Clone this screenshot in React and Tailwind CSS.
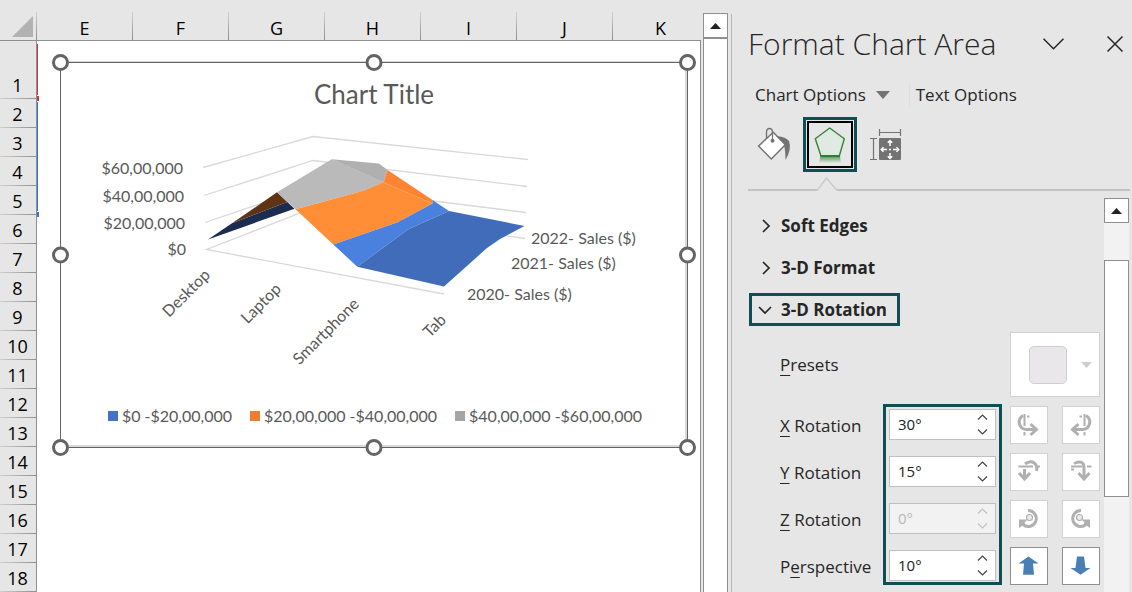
import React from "react";

const COLUMNS = ["E", "F", "G", "H", "I", "J", "K"];
const ROWS = Array.from({ length: 18 }, (_, i) => i + 1);

const HANDLES = [
  "-left-[9px] -top-[9px]",
  "left-1/2 -top-[9px] -translate-x-1/2",
  "-right-[9px] -top-[9px]",
  "-left-[9px] top-1/2 -translate-y-1/2",
  "-right-[9px] top-1/2 -translate-y-1/2",
  "-left-[9px] -bottom-[9px]",
  "left-1/2 -bottom-[9px] -translate-x-1/2",
  "-right-[9px] -bottom-[9px]",
];

const valueTicks = [
  { label: "$60,00,000", x: 183, y: 174 },
  { label: "$40,00,000", x: 184, y: 202 },
  { label: "$20,00,000", x: 185, y: 229 },
  { label: "$0", x: 186, y: 255 },
];

const categories = [
  { label: "Desktop", x: 211, y: 276 },
  { label: "Laptop", x: 282, y: 290 },
  { label: "Smartphone", x: 360, y: 305 },
  { label: "Tab", x: 447, y: 321 },
];

const seriesLabels = [
  { label: "2022- Sales ($)", x: 531, y: 244 },
  { label: "2021- Sales ($)", x: 511, y: 269 },
  { label: "2020- Sales ($)", x: 467, y: 300 },
];

const gridLines = [
  "203,167.5 313,136.5 528,159.5",
  "204,195.5 313,160.5 527,186.5",
  "205,222.5 313,186 526,212.5",
  "525,238.5 313,208 206.5,249.5 444,294",
];

const surface = [
  { fill: "#1a2c50", points: "208,239.5 232,223.3 287.3,202 294.5,208.7" },
  { fill: "#5f3316", points: "232,223.3 277,192.3 287.3,202" },
  { fill: "#bababa", points: "277,192.3 331.7,159.3 384,182.3 363.5,190.7 295.5,209.3" },
  { fill: "#b0b0b0", points: "331.7,159.3 379,163.5 387.5,170 383.5,182.3" },
  { fill: "#ff8e37", points: "295.5,209.3 363.5,190.7 383.5,182.3 432.5,203.5 397.7,222.3 333.3,244.5" },
  { fill: "#ff8431", points: "387.5,170 432.5,200 432.5,203.5 383.5,182.3" },
  { fill: "#4a80de", points: "333.3,244.5 397.7,222.3 432.5,203.5 432.5,200 449,211 408.3,229.3 357.3,266.7" },
  { fill: "#416cba", points: "449,211 524.5,226 500,239 486.7,248.3 444,286.5 357.3,266.7 408.3,229.3" },
];

const legend = [
  { label: "$0 -$20,00,000", color: "bg-[#4472c4]" },
  { label: "$20,00,000 -$40,00,000", color: "bg-[#ed7d31]" },
  { label: "$40,00,000 -$60,00,000", color: "bg-[#a5a5a5]" },
];

const UpTriangle = () => (
  <svg width="11" height="6" viewBox="0 0 11 6" aria-hidden="true">
    <path d="M5.5 0 11 6H0Z" fill="#222" />
  </svg>
);

const SurfaceChart = () => (
  <div className="relative ml-[23px] mr-[21px] mt-[21px] flex flex-col border border-[#646464] bg-white font-['Lato',sans-serif] text-[#595959] shadow-[inset_-2px_-2px_0_#d9d9d9,0_-1px_0_#d9d9d9]">
    <h2 className="mt-4 text-center text-[26px] leading-[30px]">Chart Title</h2>
    <svg viewBox="61 120 626 270" className="mt-[11px] w-full" role="img" aria-label="3-D surface chart of sales">
      <g fill="none" stroke="#d9d9d9" strokeWidth="1.3">
        {gridLines.map((points) => (
          <polyline key={points} points={points} />
        ))}
      </g>
      {surface.map((face) => (
        <polygon key={face.points} points={face.points} fill={face.fill} />
      ))}
      <g fill="#595959" fontSize="16">
        {valueTicks.map((t) => (
          <text key={t.label} x={t.x} y={t.y} textAnchor="end">
            {t.label}
          </text>
        ))}
        {categories.map((c) => (
          <text key={c.label} textAnchor="end" transform={`translate(${c.x} ${c.y}) rotate(-45)`}>
            {c.label}
          </text>
        ))}
        {seriesLabels.map((s) => (
          <text key={s.label} x={s.x} y={s.y}>
            {s.label}
          </text>
        ))}
      </g>
    </svg>
    <ul className="mb-5 mt-[15px] flex justify-center gap-[18px] pl-[2px] text-[16px] leading-[22px]">
      {legend.map((item) => (
        <li key={item.label} className="flex items-center gap-1">
          <span className={`size-[10px] ${item.color}`} />
          {item.label}
        </li>
      ))}
    </ul>
    {HANDLES.map((position) => (
      <span
        key={position}
        className={`absolute size-[17px] rounded-full border-3 border-[#646464] bg-white ${position}`}
      />
    ))}
  </div>
);

const Sheet = () => (
  <div className="relative min-w-0 flex-1 overflow-hidden bg-white after:absolute after:bottom-0 after:right-0 after:top-10 after:w-px after:bg-[#8f8f8f]">
    <table className="w-max table-fixed border-separate border-spacing-0 text-[18px] text-black">
      <thead>
        <tr className="bg-[#e6e6e6]">
          <th className="w-[37px] border-b border-[#8f8f8f] p-0">
            <div className="flex h-10 w-[37px] items-end">
              <svg className="mb-[3px] ml-3" width="21" height="21" viewBox="0 0 21 21" aria-hidden="true">
                <path d="M21 0V21H0Z" fill="#b2b2b2" />
              </svg>
              <span className="ml-auto h-7 w-px bg-linear-to-b from-[#d0d0d0] to-[#8f8f8f]" />
            </div>
          </th>
          {COLUMNS.map((name) => (
            <th key={name} scope="col" className="w-24 border-b border-[#8f8f8f] p-0 font-normal">
              <div className="flex h-10 w-24 items-end">
                <span className="flex-1 text-center leading-6">{name}</span>
                <span className="h-7 w-px bg-linear-to-b from-[#d0d0d0] to-[#8f8f8f]" />
              </div>
            </th>
          ))}
        </tr>
      </thead>
      <tbody>
        {ROWS.map((row) => (
          <tr key={row} className={row === 1 ? "h-[58px]" : "h-[29px]"}>
            <th scope="row" className="border-r border-[#8f8f8f] bg-[#e6e6e6] p-0 align-bottom font-normal">
              <span className="block h-7 pr-px leading-[30px]">{row}</span>
              <span className="block h-px bg-linear-to-r from-[#d0d0d0] to-[#8f8f8f]" />
            </th>
            {row === 1 && (
              <td colSpan={COLUMNS.length} rowSpan={ROWS.length} className="relative p-0 align-top">
                <span className="absolute left-0 top-[3px] h-[51px] w-px bg-[#c23b48]" />
                <span className="absolute left-0 top-[55px] h-[5px] w-[2px] bg-[#c23b48]" />
                <span className="absolute left-0 top-[61px] h-[109px] w-px bg-[#3b74d8]" />
                <span className="absolute left-0 top-[171px] h-[5px] w-[2px] bg-[#3b74d8]" />
                <SurfaceChart />
              </td>
            )}
          </tr>
        ))}
      </tbody>
    </table>
  </div>
);

const SheetScrollbar = () => (
  <div className="ml-[2px] mr-[3px] flex w-[25px] flex-col pt-[13px]">
    <button
      type="button"
      aria-label="Scroll up"
      className="flex h-[25px] items-center justify-center border border-[#8f8f8f] bg-white"
    >
      <UpTriangle />
    </button>
    <div className="flex-1 border-x border-t border-[#8f8f8f] bg-white" />
  </div>
);

const BucketIcon = () => (
  <svg width="36" height="36" viewBox="757 127 36 36" aria-hidden="true">
    <path d="M777 136q9 1 12 5q3 8-3.500 19q0-9-1.500-15Z" fill="#737373" />
    <path d="M773.300 132.300 785.300 144.700 771.300 159 758.600 146Z" fill="#fff" stroke="#737373" strokeWidth="1.500" />
    <path d="M766.500 139v-6.500q0-4 3-4t3 4v8" fill="none" stroke="#737373" strokeWidth="1.300" />
    <circle cx="772.500" cy="140.700" r="2" fill="#737373" />
  </svg>
);

const PentagonIcon = () => (
  <svg width="42" height="43" viewBox="809 123 42 43" aria-hidden="true">
    <defs>
      <linearGradient id="reflection" x1="0" y1="0" x2="0" y2="1">
        <stop offset="0" stopColor="#2f7d32" stopOpacity="0.8" />
        <stop offset="1" stopColor="#2f7d32" stopOpacity="0" />
      </linearGradient>
    </defs>
    <path d="M820.500 156H840L841 163H819Z" fill="url(#reflection)" />
    <path d="M829.700 128 844.300 138.700 839.300 156H821L815.300 138.700Z" fill="#dfeae0" stroke="#3a813a" strokeWidth="1.400" />
    <path d="M820.500 156H840" stroke="#2f7d32" strokeWidth="2" />
  </svg>
);

const SizeIcon = () => (
  <svg width="36" height="36" viewBox="868 127 36 36" aria-hidden="true">
    <path d="M879 132.500H901M879.500 129v7M900.500 129v7M873.500 138.500V159.500M870 138.500h7M870 159.500h7" fill="none" stroke="#737373" strokeWidth="1.200" />
    <rect x="879" y="138" width="22" height="22" rx="1" fill="#737373" />
    <path
      d="M890 141v5M890 158v-5M882 149.500h5M898 149.500h-5M887.800 142.700 890 140.500l2.200 2.200M887.800 156.300l2.200 2.200 2.200-2.200M883.500 147.300l-2.200 2.200 2.200 2.200M896.500 147.300l2.200 2.200-2.200 2.200M889 149.500h2"
      fill="none"
      stroke="#fff"
      strokeWidth="1.500"
    />
  </svg>
);

const TurnX = () => (
  <g stroke="#b0b0b0" fill="none">
    <path d="M14.500 8V20M14.500 26V29.500" strokeWidth="2" />
    <path d="M17 10.500h2.500" strokeWidth="2" />
    <path d="M13 9.500Q8.500 12.500 9.300 17Q10.500 23.500 17 23.500H26" strokeWidth="3" />
    <path d="M20.500 18 26.500 23.500 20.500 29" strokeWidth="3" />
  </g>
);

const TurnZ = () => (
  <g stroke="#b0b0b0" fill="none">
    <path d="M18 10.500A8 8 0 1 1 13 24.500" strokeWidth="3" />
    <path d="M9 19.500h8.500l-3 3 1 2-3 1L9 28Z" fill="#b0b0b0" stroke="none" />
    <circle cx="19.500" cy="17.500" r="3" fill="#efebf1" strokeWidth="1.200" />
  </g>
);

const icons = {
  xLeft: <TurnX />,
  xRight: (
    <g transform="matrix(-1 0 0 1 37 0)">
      <TurnX />
    </g>
  ),
  yUp: (
    <g stroke="#b0b0b0" fill="none">
      <path d="M8.500 13.500H23M28 13.500h2" strokeWidth="2" />
      <path d="M15 11Q22 6 26 12Q27.500 15 26.500 18" strokeWidth="3" />
      <path d="M14.500 16V26" strokeWidth="3" />
      <path d="M9 20 14.500 26 20 20" strokeWidth="3" />
    </g>
  ),
  yDown: (
    <g stroke="#b0b0b0" fill="none">
      <path d="M9 13.500H20M25 13.500h4.500M9 16.500h3" strokeWidth="2" />
      <path d="M12 10.500Q22 6 22 15V26" strokeWidth="3" />
      <path d="M16.500 20 22 26 27.500 20" strokeWidth="3" />
    </g>
  ),
  zLeft: <TurnZ />,
  zRight: (
    <g transform="matrix(-1 0 0 1 37 0)">
      <TurnZ />
    </g>
  ),
  narrow: <path d="M18.500 9.500 28.500 16.500H23L24 27.700H13L14 16.500H8.500Z" fill="#4a7fb5" />,
  widen: <path d="M18.500 27.700 28.500 21H23.500L22 9.500H15L13.500 21H8.500Z" fill="#4a7fb5" />,
};

const rotations = [
  { id: "rot-x", before: "", accessKey: "X", after: " Rotation", value: "30°" },
  { id: "rot-y", before: "", accessKey: "Y", after: " Rotation", value: "15°" },
  { id: "rot-z", before: "", accessKey: "Z", after: " Rotation", value: "0°", disabled: true },
  { id: "perspective", before: "P", accessKey: "e", after: "rspective", value: "10°" },
];

const rotateButtons = [
  { label: "Rotate left", icon: "xLeft" },
  { label: "Rotate right", icon: "xRight" },
  { label: "Rotate up", icon: "yUp" },
  { label: "Rotate down", icon: "yDown" },
  { label: "Rotate counter-clockwise", icon: "zLeft" },
  { label: "Rotate clockwise", icon: "zRight" },
  { label: "Narrow field of view", icon: "narrow", active: true },
  { label: "Widen field of view", icon: "widen", active: true },
];

const sections = [
  { title: "Soft Edges", open: false },
  { title: "3-D Format", open: false },
  { title: "3-D Rotation", open: true },
];

const Stepper = ({ disabled }) => (
  <div
    className={`flex w-[25px] flex-col items-center justify-center gap-[9px] ${
      disabled ? "text-[#c0c0c0]" : "text-[#444]"
    }`}
  >
    <button type="button" aria-label="Increase" disabled={disabled}>
      <svg width="11" height="6" viewBox="0 0 11 6" fill="none" stroke="currentColor" strokeWidth="1.200">
        <path d="M1 5.500 5.500 1 10 5.500" />
      </svg>
    </button>
    <button type="button" aria-label="Decrease" disabled={disabled}>
      <svg width="11" height="6" viewBox="0 0 11 6" fill="none" stroke="currentColor" strokeWidth="1.200">
        <path d="M1 .5 5.500 5 10 .5" />
      </svg>
    </button>
  </div>
);

const RotationControls = () => (
  <div className="mt-[7px] flex pl-8">
    <div className="flex flex-1 flex-col gap-[9px] pt-[3px]">
      {rotations.map((r) => (
        <label key={r.id} htmlFor={r.id} className="h-[38px] whitespace-nowrap leading-[38px]">
          {r.before}
          <span className="underline decoration-1 underline-offset-4">{r.accessKey}</span>
          {r.after}
        </label>
      ))}
    </div>
    <div className="flex w-[119px] flex-col gap-4 self-start border-3 border-[#0e4f56] px-[3px] pb-px pt-[2px]">
      {rotations.map((r) => (
        <div
          key={r.id}
          className={`flex h-[31px] border border-[#c0c0c0] ${r.disabled ? "bg-[#f2f2f2]" : "bg-white"}`}
        >
          <input
            id={r.id}
            type="text"
            defaultValue={r.value}
            disabled={r.disabled}
            className="min-w-0 flex-1 pl-2 text-[15px] text-[#222] outline-none disabled:text-[#b8b8b8]"
          />
          <Stepper disabled={r.disabled} />
        </div>
      ))}
    </div>
    <div className="ml-2 grid grid-cols-2 content-start gap-x-[14px] gap-y-[9px] pt-[2px]">
      {rotateButtons.map((b) => (
        <button
          key={b.icon}
          type="button"
          aria-label={b.label}
          disabled={!b.active}
          className={`size-[38px] border bg-white ${b.active ? "border-[#8f8f8f]" : "border-[#d2d2d2]"}`}
        >
          <svg width="36" height="36" viewBox="1 1 36 36" aria-hidden="true">
            {icons[b.icon]}
          </svg>
        </button>
      ))}
    </div>
  </div>
);

const FormatPane = () => (
  <aside className="flex w-[400px] shrink-0 flex-col pl-4 pr-[2px] text-[17px] text-[#262626]">
    <header className="flex items-center pr-[7px] pt-[22px]">
      <h1 className="flex-1 whitespace-nowrap text-[30px] font-light leading-[44px]">Format Chart Area</h1>
      <button type="button" aria-label="Task pane options">
        <svg width="21" height="12" viewBox="0 0 21 12" fill="none" stroke="#262626" strokeWidth="1.500">
          <path d="M.5 .8 10.500 10.800 20.500 .8" />
        </svg>
      </button>
      <button type="button" aria-label="Close" className="ml-[43px]">
        <svg width="16" height="16" viewBox="0 0 16 16" stroke="#262626" strokeWidth="1.500">
          <path d="M.5 .5 15.500 15.500M15.500 .5 .5 15.500" />
        </svg>
      </button>
    </header>

    <div className="mt-[17px] flex h-6 items-center pl-[7px] leading-6">
      <button type="button" className="flex items-center gap-[10px] whitespace-nowrap">
        Chart Options
        <svg width="14" height="8" viewBox="0 0 14 8" aria-hidden="true">
          <path d="M0 0H14L7 8Z" fill="#737373" />
        </svg>
      </button>
      <span className="ml-[19px] h-6 w-px bg-[#dedede]" />
      <button type="button" className="ml-[6px] whitespace-nowrap">
        Text Options
      </button>
    </div>

    <div className="mt-[10px] flex h-[55px] items-center pl-[9px]">
      <button type="button" aria-label="Fill & Line">
        <BucketIcon />
      </button>
      <button type="button" aria-label="Effects" className="ml-[10px] border-3 border-[#0e4f56] p-px">
        <span className="block border-2 border-black">
          <PentagonIcon />
        </span>
      </button>
      <button type="button" aria-label="Size & Properties" className="ml-[11px]">
        <SizeIcon />
      </button>
    </div>

    <div className="mt-[5px] flex items-end">
      <span className="h-[2px] w-[69px] bg-[#c3c3c3]" />
      <svg width="20" height="14" viewBox="0 0 20 14" fill="none" stroke="#c8c8c8" strokeWidth="1.300">
        <path d="M0 13.500 9.500 1 20 13.500" />
      </svg>
      <span className="h-[2px] flex-1 bg-[#c3c3c3]" />
    </div>

    <div className="flex min-h-0 flex-1 pr-px">
      <div className="min-w-0 flex-1 pr-1">
        <div className="flex flex-col items-start pl-px pt-[18px]">
          {sections.map((s) => (
            <button
              key={s.title}
              type="button"
              aria-expanded={s.open}
              className={`mb-[9px] flex h-[33px] items-center gap-[7px] border-3 pl-[6px] pr-[10px] font-bold last:mb-0 ${
                s.open ? "border-[#0e4f56]" : "border-transparent"
              }`}
            >
              <svg width="16" height="16" viewBox="0 0 16 16" fill="none" stroke="#262626" strokeWidth="1.700">
                {s.open ? <path d="M1 5 7 11 13 5" /> : <path d="M5 2 11 8 5 14" />}
              </svg>
              {s.title}
            </button>
          ))}
        </div>

        <div className="mt-[6px] flex h-[65px] items-center justify-between pl-8">
          <label htmlFor="presets">
            <span className="underline decoration-1 underline-offset-4">P</span>resets
          </label>
          <button
            id="presets"
            type="button"
            disabled
            className="flex h-full w-[90px] items-center justify-between border border-[#d2d2d2] bg-white pl-[18px] pr-[7px]"
          >
            <span className="size-[38px] rounded-[5px] border border-[#cfcdd0] bg-[#e9e7ea]" />
            <svg width="11" height="6" viewBox="0 0 11 6" aria-hidden="true">
              <path d="M0 0H11L5.500 6Z" fill="#cfcfcf" />
            </svg>
          </button>
        </div>

        <RotationControls />
      </div>

      <div className="mt-[7px] flex w-[25px] flex-col bg-[#f2f2f2]">
        <button
          type="button"
          aria-label="Scroll pane up"
          className="flex h-[25px] items-center justify-center border border-[#8f8f8f] bg-white"
        >
          <UpTriangle />
        </button>
        <div className="mt-[37px] h-[237px] border border-[#8f8f8f] bg-white" />
      </div>
    </div>
  </aside>
);

const App = () => {
  return (
    <div className="flex h-screen overflow-hidden bg-[#e6e6e6] font-['Open_Sans',sans-serif]">
      <Sheet />
      <SheetScrollbar />
      <div className="mt-[14px] w-px bg-[#b4b4b4]" />
      <FormatPane />
    </div>
  );
};

export default App;
